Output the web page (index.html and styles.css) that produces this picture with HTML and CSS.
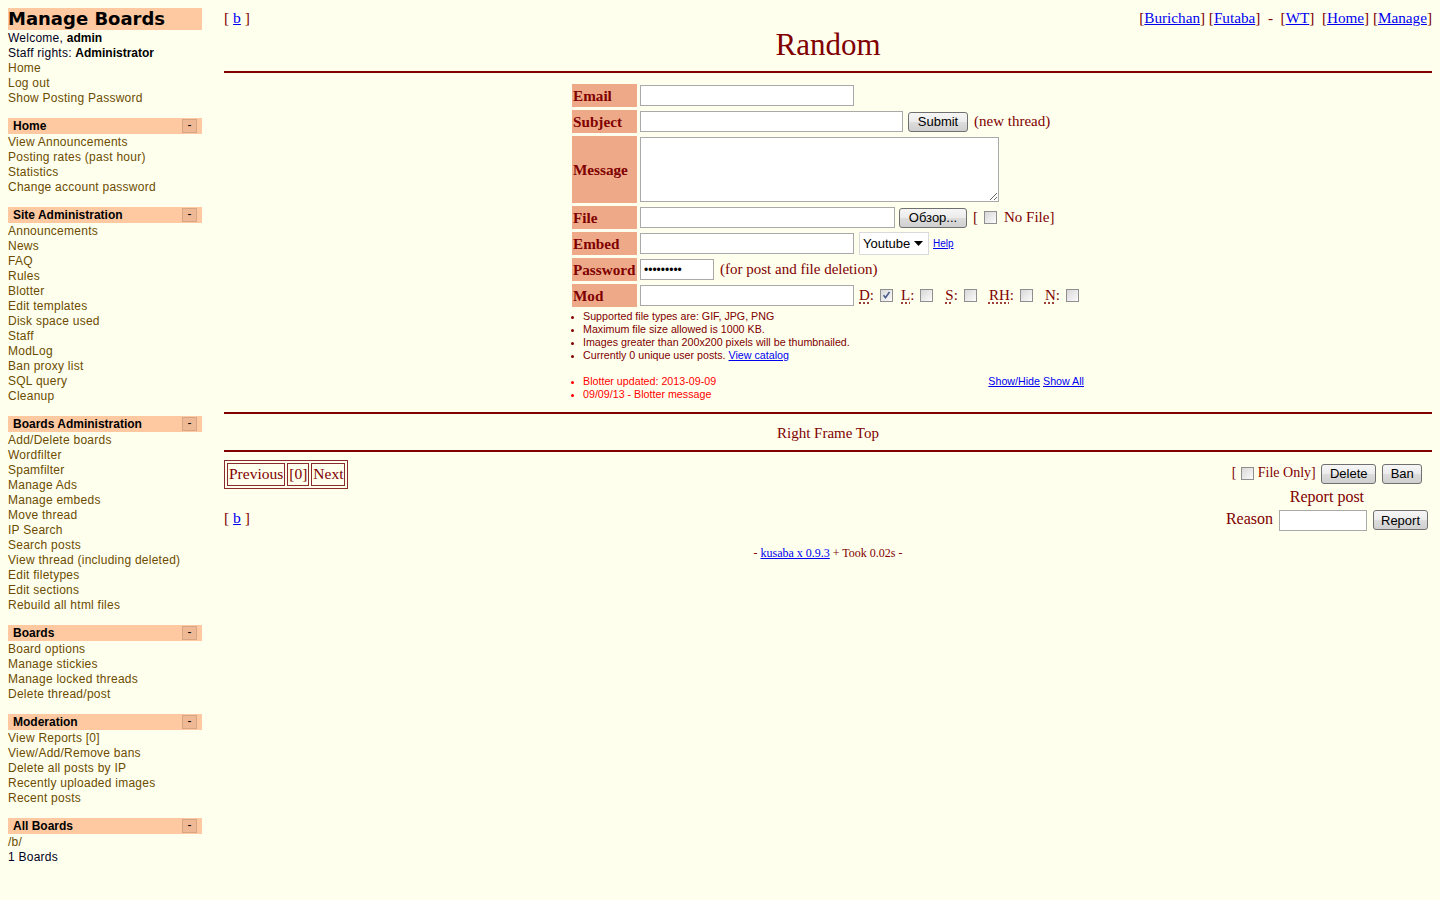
FILE: index.html
```html
<!DOCTYPE html>
<html>
<head>
<meta charset="utf-8">
<title>Random</title>
<link rel="stylesheet" href="styles.css">
</head>
<body>
<nav class="menu">
  <h1 class="menu-title">Manage Boards</h1>
  <div class="menu-line">Welcome, <b>admin</b></div>
  <div class="menu-line">Staff rights: <b>Administrator</b></div>
  <a class="menu-link" href="#">Home</a>
  <a class="menu-link" href="#">Log out</a>
  <a class="menu-link" href="#">Show Posting Password</a>

  <section class="sect">
    <h2 class="sect-head">Home<span class="tog">-</span></h2>
    <a class="menu-link" href="#">View Announcements</a>
    <a class="menu-link" href="#">Posting rates (past hour)</a>
    <a class="menu-link" href="#">Statistics</a>
    <a class="menu-link" href="#">Change account password</a>
  </section>

  <section class="sect">
    <h2 class="sect-head">Site Administration<span class="tog">-</span></h2>
    <a class="menu-link" href="#">Announcements</a>
    <a class="menu-link" href="#">News</a>
    <a class="menu-link" href="#">FAQ</a>
    <a class="menu-link" href="#">Rules</a>
    <a class="menu-link" href="#">Blotter</a>
    <a class="menu-link" href="#">Edit templates</a>
    <a class="menu-link" href="#">Disk space used</a>
    <a class="menu-link" href="#">Staff</a>
    <a class="menu-link" href="#">ModLog</a>
    <a class="menu-link" href="#">Ban proxy list</a>
    <a class="menu-link" href="#">SQL query</a>
    <a class="menu-link" href="#">Cleanup</a>
  </section>

  <section class="sect">
    <h2 class="sect-head">Boards Administration<span class="tog">-</span></h2>
    <a class="menu-link" href="#">Add/Delete boards</a>
    <a class="menu-link" href="#">Wordfilter</a>
    <a class="menu-link" href="#">Spamfilter</a>
    <a class="menu-link" href="#">Manage Ads</a>
    <a class="menu-link" href="#">Manage embeds</a>
    <a class="menu-link" href="#">Move thread</a>
    <a class="menu-link" href="#">IP Search</a>
    <a class="menu-link" href="#">Search posts</a>
    <a class="menu-link" href="#">View thread (including deleted)</a>
    <a class="menu-link" href="#">Edit filetypes</a>
    <a class="menu-link" href="#">Edit sections</a>
    <a class="menu-link" href="#">Rebuild all html files</a>
  </section>

  <section class="sect">
    <h2 class="sect-head">Boards<span class="tog">-</span></h2>
    <a class="menu-link" href="#">Board options</a>
    <a class="menu-link" href="#">Manage stickies</a>
    <a class="menu-link" href="#">Manage locked threads</a>
    <a class="menu-link" href="#">Delete thread/post</a>
  </section>

  <section class="sect">
    <h2 class="sect-head">Moderation<span class="tog">-</span></h2>
    <a class="menu-link" href="#">View Reports [0]</a>
    <a class="menu-link" href="#">View/Add/Remove bans</a>
    <a class="menu-link" href="#">Delete all posts by IP</a>
    <a class="menu-link" href="#">Recently uploaded images</a>
    <a class="menu-link" href="#">Recent posts</a>
  </section>

  <section class="sect">
    <h2 class="sect-head">All Boards<span class="tog">-</span></h2>
    <a class="menu-link" href="#">/b/</a>
    <div class="menu-line">1 Boards</div>
  </section>
</nav>

<main class="main">
  <div class="topbar">
    <div class="navbar">[ <a href="#">b</a> ]</div>
    <div class="adminbar">[<a href="#">Burichan</a>] [<a href="#">Futaba</a>]&nbsp; - &nbsp;[<a href="#">WT</a>]&nbsp; [<a href="#">Home</a>] [<a href="#">Manage</a>]</div>
  </div>
  <div class="logo">Random</div>
  <hr class="rule">

  <form class="postarea">
    <table class="postform">
      <tbody>
        <tr class="row">
          <td class="postblock">Email</td>
          <td><input class="field w214" type="text"></td>
        </tr>
        <tr class="row">
          <td class="postblock">Subject</td>
          <td><input class="field w263" type="text"><button class="btn btn-submit" type="button">Submit</button><span class="note">(new thread)</span></td>
        </tr>
        <tr class="row-msg">
          <td class="postblock">Message</td>
          <td><textarea class="msg"></textarea></td>
        </tr>
        <tr class="row">
          <td class="postblock">File</td>
          <td><input class="field w255" type="text"><button class="btn btn-browse" type="button">Обзор...</button><span class="note">[</span><span class="cb cb-nofile"></span><span class="note2">No File]</span></td>
        </tr>
        <tr class="row">
          <td class="postblock">Embed</td>
          <td><input class="field w214" type="text"><span class="sel">Youtube<svg class="sel-arrow" width="9" height="5" viewBox="0 0 9 5"><path d="M0 0h9L4.5 5z" fill="#000"/></svg></span><a class="help" href="#">Help</a></td>
        </tr>
        <tr class="row">
          <td class="postblock">Password</td>
          <td><input class="field w74 pass" type="password" value="123456789"><span class="note">(for post and file deletion)</span></td>
        </tr>
        <tr class="row">
          <td class="postblock">Mod</td>
          <td class="modcell"><input class="field w214" type="text"><span class="mod m-d"><abbr class="ab">D</abbr>:</span><span class="cb cb-on"><svg width="11" height="11" viewBox="0 0 11 11"><path d="M2.5 5.2l2 2.4 4-5.6" fill="none" stroke="#4a5e8c" stroke-width="1.6"/></svg></span><span class="mod m-l"><abbr class="ab">L</abbr>:</span><span class="cb"></span><span class="mod"><abbr class="ab">S</abbr>:</span><span class="cb"></span><span class="mod"><abbr class="ab">RH</abbr>:</span><span class="cb"></span><span class="mod"><abbr class="ab">N</abbr>:</span><span class="cb"></span></td>
        </tr>
        <tr>
          <td class="rules" colspan="2">
            <ul class="rules-list">
              <li>Supported file types are: GIF, JPG, PNG</li>
              <li>Maximum file size allowed is 1000 KB.</li>
              <li>Images greater than 200x200 pixels will be thumbnailed.</li>
              <li>Currently 0 unique user posts. <a href="#">View catalog</a></li>
            </ul>
            <ul class="rules-list blotter">
              <li><span class="blot-links"><a href="#">Show/Hide</a> <a href="#">Show All</a></span>Blotter updated: 2013-09-09</li>
              <li>09/09/13 - Blotter message</li>
            </ul>
          </td>
        </tr>
      </tbody>
    </table>
  </form>

  <hr class="rule rule2">
  <div class="frametop">Right Frame Top</div>
  <hr class="rule rule3">

  <div class="bottom">
    <div class="bottom-left">
      <table class="pages">
        <tbody><tr><td>Previous</td><td>[0]</td><td>Next</td></tr></tbody>
      </table>
      <div class="navbar navbar-bottom">[ <a href="#">b</a> ]</div>
    </div>
    <div class="userdelete">
      <div class="ud-line1">[ <span class="cb cb-small"></span>File Only] <button class="btn btn-del" type="button">Delete</button><button class="btn btn-ban" type="button">Ban</button></div>
      <div class="ud-line2">Report post</div>
      <div class="ud-line3">Reason <input class="field w88" type="text"><button class="btn btn-report" type="button">Report</button></div>
    </div>
  </div>

  <div class="footer">- <a href="#">kusaba x 0.9.3</a> + Took 0.02s -</div>
</main>
</body>
</html>
```

FILE: styles.css
```css
html, body {
  margin: 0;
  padding: 0;
  background: #ffffee;
}

body {
  display: flex;
  align-items: flex-start;
  min-height: 900px;
}

/* ---------- left menu ---------- */
.menu {
  width: 194px;
  flex: 0 0 194px;
  padding: 8px 8px 0 8px;
  font-family: "Liberation Sans", Arial, sans-serif;
  font-size: 12px;
  line-height: 15px;
  color: #000022;
}

.menu-title {
  margin: 0;
  height: 22px;
  line-height: 22px;
  background: #fec9a0;
  font-family: "DejaVu Sans", Verdana, sans-serif;
  font-size: 18px;
  font-weight: bold;
  color: #000;
  padding-left: 0;
}

.menu-line,
.menu-link {
  display: block;
  height: 15px;
  line-height: 17px;
  white-space: nowrap;
  letter-spacing: 0.25px;
}

.menu-line b {
  color: #000;
  letter-spacing: 0;
}

.menu-link {
  color: #6b4c00;
  text-decoration: none;
}

.sect {
  margin-top: 13px;
}

.sect-head {
  margin: 0;
  height: 16px;
  line-height: 16px;
  background: #fec9a0;
  font-size: 12px;
  font-weight: bold;
  color: #000;
  padding-left: 5px;
}

.tog {
  float: right;
  width: 13px;
  height: 12px;
  margin: 1px 5px 0 0;
  border: 1px solid #d7a684;
  background: #eeb994;
  font-weight: normal;
  font-size: 12px;
  line-height: 11px;
  text-align: center;
  color: #000;
}

/* ---------- main frame ---------- */
.main {
  flex: 1 1 auto;
  margin: 0 8px 0 14px;
  padding-top: 9px;
  font-family: "Liberation Serif", "Times New Roman", serif;
  font-size: 15px;
  color: #800000;
}

.main a {
  color: #0000ee;
}

.topbar {
  display: flex;
  justify-content: space-between;
  line-height: 18px;
  height: 18px;
}

.navbar {
  font-size: 15.6px;
}

.adminbar {
  font-size: 15.2px;
  white-space: nowrap;
}

.logo {
  text-align: center;
  font-size: 31px;
  line-height: 36px;
  margin-top: 0;
}

.rule {
  border: 0;
  height: 0;
  border-top: 2px solid #800000;
  margin: 8px 0 0 0;
}

/* ---------- post form ---------- */
.postarea {
  margin: 8px 0 0 0;
}

.postform {
  width: 518px;
  margin: 0 auto;
  border-collapse: separate;
  border-spacing: 3px;
}

.postform td {
  padding: 0;
  white-space: nowrap;
  vertical-align: middle;
}

.row td {
  height: 23px;
}

.row-msg td {
  height: 67px;
}

.postblock {
  width: 63px;
  background: #eeaa88;
  font-size: 15.2px;
  font-weight: bold;
  padding: 0 1px !important;
  color: #800000;
}

.field {
  box-sizing: border-box;
  height: 21px;
  border: 1px solid #a9a9a9;
  background: #fff;
  padding: 1px 3px;
  margin: 0;
  vertical-align: middle;
  font-family: "Liberation Sans", Arial, sans-serif;
  font-size: 13px;
}

.w214 { width: 214px; }
.w263 { width: 263px; }
.w255 { width: 255px; }
.w74 { width: 74px; }
.w88 { width: 88px; }

.pass {
  font-size: 12px;
}

.msg {
  box-sizing: border-box;
  width: 359px;
  height: 65px;
  border: 1px solid #a9a9a9;
  background: #fff;
  margin: 0;
  vertical-align: middle;
  resize: both;
}

.btn {
  box-sizing: border-box;
  height: 20px;
  padding: 0 7px;
  margin: 0;
  border: 1px solid #707070;
  border-radius: 3px;
  background: linear-gradient(#f6f6f6 0%, #ebebeb 50%, #dddddd 51%, #cfcfcf 100%);
  font-family: "Liberation Sans", Arial, sans-serif;
  font-size: 13px;
  color: #000;
  vertical-align: middle;
  line-height: 17px;
}

.btn-submit {
  width: 60px;
  margin-left: 5px;
}

.btn-browse {
  width: 68px;
  margin-left: 4px;
}

.note {
  margin-left: 6px;
  vertical-align: middle;
}

.note2 {
  margin-left: 7px;
  vertical-align: middle;
}

.cb {
  display: inline-block;
  box-sizing: border-box;
  width: 13px;
  height: 13px;
  border: 1px solid #8f8f8f;
  background: linear-gradient(135deg, #d8d8d8 0%, #f4f4f4 80%, #ffffff 100%);
  vertical-align: middle;
}

.cb svg {
  display: block;
}

.cb-nofile {
  margin-left: 6px;
}

.sel {
  display: inline-flex;
  align-items: center;
  justify-content: space-between;
  box-sizing: border-box;
  width: 70px;
  height: 23px;
  margin-left: 5px;
  padding: 0 5px 0 3px;
  border: 1px solid #dadada;
  background: #fff;
  font-family: "Liberation Sans", Arial, sans-serif;
  font-size: 13px;
  color: #000;
  vertical-align: middle;
}

.sel-arrow {
  display: block;
}

.help {
  margin-left: 4px;
  font-family: "Liberation Sans", Arial, sans-serif;
  font-size: 10px;
  vertical-align: middle;
}

.mod {
  margin-left: 12px;
  margin-right: 6px;
  vertical-align: middle;
}

.mod.m-d {
  margin-left: 5px;
}

.mod.m-l {
  margin-left: 8px;
}

.ab {
  text-decoration: underline dotted #800000;
  text-underline-offset: 3px;
}

/* ---------- rules / blotter ---------- */
.rules {
  padding: 0;
  font-family: "Liberation Sans", Arial, sans-serif;
  font-size: 10.7px;
  line-height: 13px;
  color: #800000;
}

.rules-list {
  margin: 0;
  padding-left: 11px;
  list-style: disc;
}

.rules-list li::marker {
  font-size: 9px;
}

.blotter {
  margin-top: 13px;
  color: #ff0000;
}

.blot-links {
  float: right;
}

.rule2 {
  margin-top: 8px;
}

.frametop {
  text-align: center;
  line-height: 18px;
  margin-top: 10px;
}

.rule3 {
  margin-top: 8px;
}

/* ---------- bottom ---------- */
.bottom {
  display: flex;
  justify-content: space-between;
  align-items: flex-start;
  margin-top: 8px;
}

.pages {
  border: 1px solid #8b2a2a;
  border-spacing: 2px;
  border-collapse: separate;
  font-size: 15.5px;
}

.pages td {
  border: 1px solid #8b2a2a;
  padding: 1px 1px 2px;
  line-height: 18px;
}

.navbar-bottom {
  margin-top: 20px;
  line-height: 18px;
}

.userdelete {
  text-align: center;
  white-space: nowrap;
  padding: 0 4px 0 0;
  font-size: 16px;
}

.ud-line1 {
  height: 25px;
  line-height: 25px;
  font-size: 14px;
}

.ud-line1 .cb-small {
  margin: 0 4px 0 1px;
}

.btn-del {
  width: 55px;
  margin-left: 2px;
}

.btn-ban {
  width: 40px;
  margin-left: 6px;
}

.ud-line2 {
  line-height: 24px;
}

.ud-line3 {
  line-height: 20px;
}

.ud-line3 .field {
  margin-left: 2px;
}

.btn-report {
  width: 55px;
  margin-left: 6px;
}

.footer {
  clear: both;
  text-align: center;
  font-size: 12px;
  line-height: 16px;
  margin-top: 14px;
}
```
